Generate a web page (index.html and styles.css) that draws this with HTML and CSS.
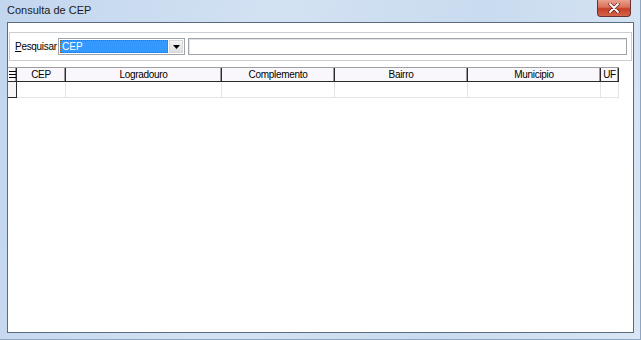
FILE: index.html
```html
<!DOCTYPE html>
<html lang="pt">
<head>
    <meta charset="UTF-8">
    <title>Consulta de CEP</title>
    <link rel="stylesheet" href="styles.css">
</head>
<body>
    <div class="window">
        <!-- Title bar -->
        <div class="titlebar">
            <span class="title">Consulta de CEP</span>
            <div class="close-btn">
                <svg width="12" height="10" viewBox="0 0 12 10">
                    <path d="M2 1 L10 9 M10 1 L2 9" stroke="#5a2020" stroke-width="3.2" stroke-linecap="round"/>
                    <path d="M2 1 L10 9 M10 1 L2 9" stroke="#fff" stroke-width="1.8" stroke-linecap="round"/>
                </svg>
            </div>
        </div>

        <!-- Client area -->
        <div class="client">
            <div class="search-box">
                <label class="search-label"><u>P</u>esquisar</label>
                <div class="combo">
                    <span class="combo-value"><span class="focus">CEP</span></span>
                    <span class="combo-btn">
                        <svg width="7" height="4" viewBox="0 0 7 4"><path d="M0 0 H7 L3.5 4 Z" fill="#000"/></svg>
                    </span>
                </div>
                <div class="search-input"></div>
            </div>

            <div class="grid">
                <div class="head indicator">
                    <svg width="7" height="9" viewBox="0 0 7 9">
                        <path d="M0 1.5 H7 M0 4.5 H7 M0 7.5 H7" stroke="#000" stroke-width="1"/>
                    </svg>
                </div>
                <div class="head">CEP</div>
                <div class="head">Logradouro</div>
                <div class="head">Complemento</div>
                <div class="head">Bairro</div>
                <div class="head">Municipio</div>
                <div class="head">UF</div>

                <div class="cell indicator"></div>
                <div class="cell"></div>
                <div class="cell"></div>
                <div class="cell"></div>
                <div class="cell"></div>
                <div class="cell"></div>
                <div class="cell"></div>
            </div>
        </div>
    </div>
</body>
</html>
```

FILE: styles.css
```css
body {
    margin: 0;
    padding: 0;
    font-family: 'Liberation Sans', Arial, sans-serif;
    font-size: 10px;
    color: #000;
}
.window {
    width: 641px;
    height: 340px;
    display: flex;
    flex-direction: column;
    background: linear-gradient(100deg, #c2d6ee 0%, #d3e2f3 40%, #c9dbef 70%, #d8e6f5 100%);
    box-sizing: border-box;
    border-right: 1px solid #8fa6c0;
    border-bottom: 1px solid #8fa6c0;
}
.titlebar {
    height: 22px;
    display: flex;
    align-items: flex-start;
}
.title {
    margin: 4px 0 0 7px;
    font-size: 11px;
    color: #1a1a1a;
}
.close-btn {
    margin-left: auto;
    margin-right: 9px;
    width: 34px;
    height: 17px;
    box-sizing: border-box;
    border: 1px solid #6b3030;
    border-top: none;
    border-radius: 0 0 4px 4px;
    background: linear-gradient(#eba08d 0%, #d9705a 45%, #c43e27 55%, #d4664b 100%);
    display: flex;
    align-items: center;
    justify-content: center;
}
.client {
    margin-left: 7px;
    width: 627px;
    height: 311px;
    box-sizing: border-box;
    border: 1px solid #5b6b80;
    background: #fff;
    display: flex;
    flex-direction: column;
}
.search-box {
    margin: 9px 1px 0 1px;
    height: 29px;
    box-sizing: border-box;
    border: 1px solid #c9ced3;
    display: flex;
    align-items: flex-start;
    padding: 5px 4px 0 5px;
}
.search-label {
    flex-shrink: 0;
    width: 43px;
    margin-top: 3px;
    font-size: 10px;
    letter-spacing: -0.3px;
}
.combo {
    flex-shrink: 0;
    width: 127px;
    height: 17px;
    box-sizing: border-box;
    border: 1px solid #9fa4aa;
    padding: 1px;
    display: flex;
}
.combo-value {
    flex: 1;
    background: #3399ff;
    color: #fff;
    display: flex;
}
.focus {
    flex: 1;
    border: 1px dotted #b05a00;
    padding-left: 1px;
    line-height: 11px;
}
.combo-btn {
    width: 14px;
    margin-left: 1px;
    box-sizing: border-box;
    border: 1px solid #d8d8d8;
    background: linear-gradient(#f4f4f4, #dedede);
    display: flex;
    align-items: center;
    justify-content: center;
}
.search-input {
    flex: 1;
    height: 17px;
    margin-left: 3px;
    box-sizing: border-box;
    border: 1px solid #9fa4aa;
    box-shadow: inset 1px 1px 0 #e3e3e3;
}
.grid {
    margin-top: 6px;
    display: grid;
    grid-template-columns: 9px 49px 156px 113px 133px 133px 18px;
    width: 611px;
    border-top: 1px solid #a0a0a0;
}
.head {
    height: 14px;
    box-sizing: border-box;
    background: #f9f7fb;
    border-right: 1px solid #2a2a2a;
    border-bottom: 1px solid #2a2a2a;
    box-shadow: inset -1px 0 0 #9a9a9a;
    text-align: center;
    line-height: 13px;
    letter-spacing: -0.3px;
}
.head.indicator {
    display: flex;
    align-items: center;
    justify-content: flex-start;
    padding-left: 1px;
}
.cell {
    height: 16px;
    box-sizing: border-box;
    border-right: 1px solid #e4e4e4;
    border-bottom: 1px solid #e4e4e4;
}
.cell.indicator {
    background: #f6f6f6;
    border-right: 1px solid #2a2a2a;
    border-bottom: 1px solid #2a2a2a;
}
```
